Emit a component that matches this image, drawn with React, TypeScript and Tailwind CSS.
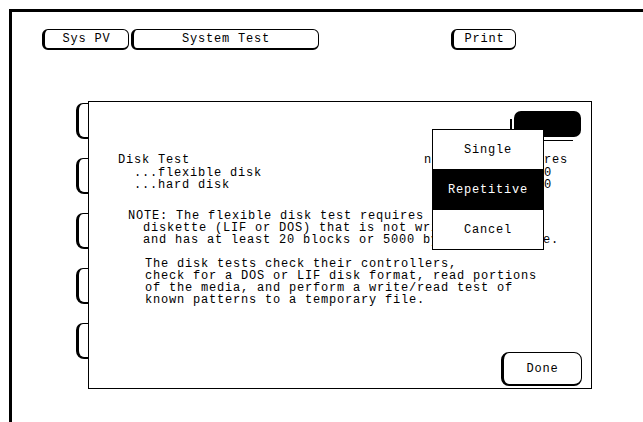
import React from "react";

const mono = { fontFamily: '"Liberation Mono", "DejaVu Sans Mono", monospace' };

const TopButton = ({ label, width }: { label: string; width: string }) => (
  <div
    className={`${width} h-[21px] flex items-center justify-center border border-black border-l-[3px] border-b-[2px] rounded-[6px] text-[12px] tracking-[0.8px] leading-none`}
  >
    {label}
  </div>
);

const SideTab = () => (
  <div className="w-[12px] h-[36px] border-t border-l-[3px] border-b-[2px] border-black rounded-tl-[7px] rounded-bl-[8px]" />
);

export default function App() {
  const noteLines = [
    "diskette (LIF or DOS) that is not write-protected",
    "and has at least 20 blocks or 5000 bytes free space.",
  ];
  const infoLines = [
    "The disk tests check their controllers,",
    "check for a DOS or LIF disk format, read portions",
    "of the media, and perform a write/read test of",
    "known patterns to a temporary file.",
  ];

  return (
    <div className="w-[643px] h-[422px] bg-white overflow-hidden text-black" style={mono}>
      <div className="pt-[9px] pl-[9px] h-full">
        <div className="h-full border-t-[3px] border-l-[3px] border-black">
          {/* top bar */}
          <div className="flex pt-[17px] pl-[30px]">
            <TopButton label="Sys PV" width="w-[87px]" />
            <div className="ml-[2px]">
              <TopButton label="System Test" width="w-[188px]" />
            </div>
            <div className="ml-[132px]">
              <TopButton label="Print" width="w-[65px]" />
            </div>
          </div>

          {/* dialog row */}
          <div className="flex mt-[51px] ml-[64px]">
            <div className="flex flex-col gap-[19px] pt-[2px]">
              <SideTab />
              <SideTab />
              <SideTab />
              <SideTab />
              <SideTab />
            </div>

            <div className="relative w-[504px] h-[288px] border border-black flex flex-col text-[12px] tracking-[0.8px] leading-[12px]">
              <div className="flex justify-end pt-[9px] pr-[10px]">
                <div className="relative w-[71px] h-[30px]">
                  <div className="absolute left-0 bottom-0 w-[63px] h-[22px] border-l-2 border-b border-black" />
                  <div className="absolute top-0 right-0 w-[67px] h-[26px] bg-black rounded-[7px]" />
                </div>
              </div>

              <div className="flex mt-[13px] whitespace-pre">
                <div className="ml-[29px] w-[306px] flex flex-col">
                  <span>Disk Test</span>
                  <span className="mt-[1px]">  ...flexible disk</span>
                  <span>  ...hard disk</span>
                </div>
                <div className="flex flex-col">
                  <span>number of failures</span>
                  <span className="mt-[1px]">               0</span>
                  <span>               0</span>
                </div>
              </div>

              <div className="flex flex-col mt-[19px] ml-[39px] whitespace-pre">
                <span>NOTE: The flexible disk test requires a</span>
                {noteLines.map((l) => (
                  <span key={l} className="ml-[15px]">
                    {l}
                  </span>
                ))}
              </div>

              <div className="flex flex-col mt-[12px] ml-[56px] whitespace-pre">
                {infoLines.map((l) => (
                  <span key={l}>{l}</span>
                ))}
              </div>

              <div className="mt-auto flex justify-end pr-[9px] pb-[2px]">
                <div className="w-[81px] h-[34px] flex items-center justify-center border border-black border-l-[3px] border-b-[2px] rounded-[8px]">
                  Done
                </div>
              </div>

              {/* pop-up menu */}
              <div className="absolute left-[343px] top-[27px] w-[112px] border border-black bg-white flex flex-col">
                <div className="h-[39px] flex items-center justify-center">Single</div>
                <div className="h-[41px] flex items-center justify-center bg-black text-white">Repetitive</div>
                <div className="h-[39px] flex items-center justify-center">Cancel</div>
              </div>
            </div>
          </div>
        </div>
      </div>
    </div>
  );
}
